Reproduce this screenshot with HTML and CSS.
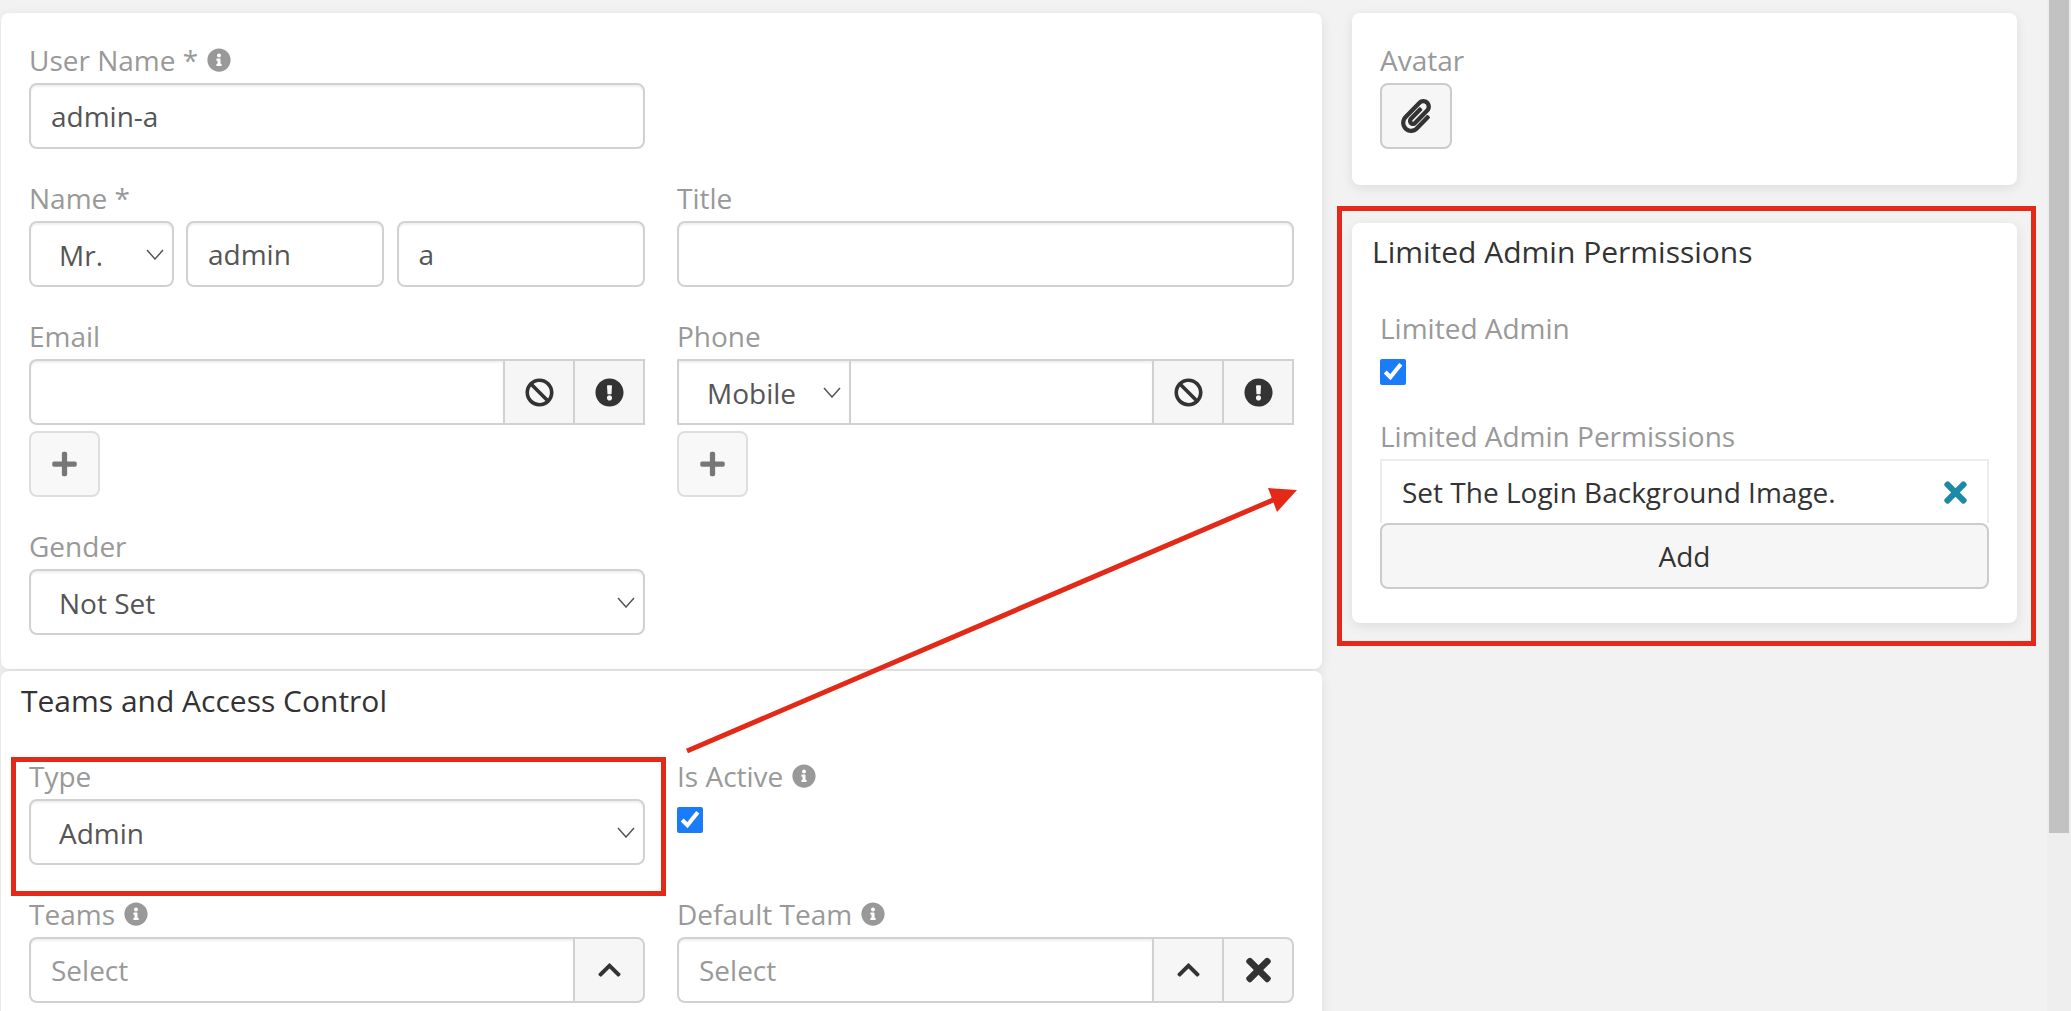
FILE: index.html
```html
<!DOCTYPE html>
<html lang="en">
<head>
  <meta charset="UTF-8">
  <meta name="viewport" content="width=device-width, initial-scale=1.0">
  <title>User - Edit</title>
  <link rel="stylesheet" href="styles.css">
</head>
<body>
  <!-- Icon sprite -->
  <svg class="sprite" aria-hidden="true">
    <symbol id="i-info" viewBox="0 0 512 512"><path d="M256 8C119.043 8 8 119.083 8 256c0 136.997 111.043 248 248 248s248-111.003 248-248C504 119.083 392.957 8 256 8zm0 110c23.196 0 42 18.804 42 42s-18.804 42-42 42-42-18.804-42-42 18.804-42 42-42zm56 254c0 6.627-5.373 12-12 12h-88c-6.627 0-12-5.373-12-12v-24c0-6.627 5.373-12 12-12h12v-64h-12c-6.627 0-12-5.373-12-12v-24c0-6.627 5.373-12 12-12h64c6.627 0 12 5.373 12 12v100h12c6.627 0 12 5.373 12 12v24z"/></symbol>
    <symbol id="i-ban" viewBox="0 0 512 512"><path d="M256 8C119.034 8 8 119.033 8 256s111.034 248 248 248 248-111.034 248-248S392.967 8 256 8zm130.108 117.892c65.448 65.448 70 165.481 20.677 235.637L150.47 105.216c70.204-49.356 170.226-44.735 235.638 20.676zM125.892 386.108c-65.448-65.448-70-165.481-20.677-235.637L361.53 406.784c-70.203 49.356-170.226 44.736-235.638-20.676z"/></symbol>
    <symbol id="i-alert" viewBox="0 0 512 512"><path d="M504 256c0 136.997-111.043 248-248 248S8 392.997 8 256C8 119.083 119.043 8 256 8s248 111.083 248 248zm-248 50c-25.405 0-46 20.595-46 46s20.595 46 46 46 46-20.595 46-46-20.595-46-46-46zm-43.673-165.346l7.418 136c.347 6.364 5.609 11.346 11.982 11.346h48.546c6.373 0 11.635-4.982 11.982-11.346l7.418-136c.375-6.874-5.098-12.654-11.982-12.654h-63.383c-6.884 0-12.356 5.78-11.981 12.654z"/></symbol>
    <symbol id="i-plus" viewBox="0 0 448 512"><path d="M416 208H272V64c0-17.67-14.33-32-32-32h-32c-17.67 0-32 14.33-32 32v144H32c-17.67 0-32 14.33-32 32v32c0 17.67 14.33 32 32 32h144v144c0 17.67 14.33 32 32 32h32c17.67 0 32-14.33 32-32V304h144c17.67 0 32-14.33 32-32v-32c0-17.67-14.33-32-32-32z"/></symbol>
    <symbol id="i-up" viewBox="0 0 448 512"><path d="M240.971 130.524l194.343 194.343c9.373 9.373 9.373 24.569 0 33.941l-22.667 22.667c-9.357 9.357-24.522 9.375-33.901.04L224 227.495 69.255 381.516c-9.379 9.335-24.544 9.317-33.901-.04l-22.667-22.667c-9.373-9.373-9.373-24.569 0-33.941L207.03 130.525c9.372-9.373 24.568-9.373 33.941-.001z"/></symbol>
    <symbol id="i-times" viewBox="0 0 352 512"><path d="M242.72 256l100.07-100.07c12.28-12.28 12.28-32.19 0-44.48l-22.24-22.24c-12.28-12.28-32.19-12.28-44.48 0L176 189.28 75.93 89.21c-12.28-12.28-32.19-12.28-44.48 0L9.21 111.45c-12.28 12.28-12.28 32.19 0 44.48L109.28 256 9.21 356.07c-12.28 12.28-12.28 32.19 0 44.48l22.24 22.24c12.28 12.28 32.2 12.28 44.48 0L176 322.72l100.07 100.07c12.28 12.28 32.2 12.28 44.48 0l22.24-22.24c12.28-12.28 12.28-32.19 0-44.48L242.72 256z"/></symbol>
    <symbol id="i-clip" viewBox="0 0 448 512"><path d="M43.246 466.142c-58.43-60.289-57.341-157.511 1.386-217.581L254.392 34c44.316-45.332 116.351-45.336 160.671 0 43.89 44.894 43.943 117.329 0 162.276L232.214 383.128c-29.855 30.537-78.633 30.111-107.982-.998-28.275-29.97-27.368-77.473 1.452-106.953l143.743-146.835c6.182-6.314 16.312-6.422 22.626-.241l22.861 22.379c6.315 6.182 6.422 16.312.241 22.626L171.427 319.927c-4.932 5.045-5.236 13.428-.648 18.292 4.372 4.634 11.245 4.711 15.688.165l182.849-186.851c19.613-20.062 19.613-52.725-.011-72.798-19.189-19.627-49.957-19.637-69.154 0L90.39 293.295c-34.763 35.56-35.299 93.12-1.191 128.313 34.01 35.093 88.985 35.137 123.058.286l172.06-175.999c6.177-6.319 16.307-6.433 22.626-.256l22.877 22.364c6.319 6.177 6.434 16.307.256 22.626l-172.06 175.998c-59.576 60.938-155.943 60.366-214.77-.485z"/></symbol>
  </svg>

  <div class="page">
    <main class="content">
      <div class="col-main">
        <section class="card card-user">
          <div class="row">
            <div class="field">
              <label class="label">User Name * <svg class="icon-info"><use href="#i-info"/></svg></label>
              <input class="control" type="text" value="admin-a">
            </div>
            <div class="field"></div>
          </div>

          <div class="row">
            <div class="field">
              <label class="label">Name *</label>
              <div class="name-group">
                <select class="control select salutation"><option>Mr.</option></select>
                <input class="control first-name" type="text" value="admin">
                <input class="control last-name" type="text" value="a">
              </div>
            </div>
            <div class="field">
              <label class="label">Title</label>
              <input class="control" type="text">
            </div>
          </div>

          <div class="row">
            <div class="field">
              <label class="label">Email</label>
              <div class="group">
                <input class="control group-input round-left" type="text">
                <button class="addon"><svg class="icon-ban"><use href="#i-ban"/></svg></button>
                <button class="addon"><svg class="icon-ban"><use href="#i-alert"/></svg></button>
              </div>
              <button class="btn-add"><svg class="icon-plus"><use href="#i-plus"/></svg></button>
            </div>
            <div class="field">
              <label class="label">Phone</label>
              <div class="group">
                <select class="control select phone-type"><option>Mobile</option></select>
                <input class="control group-input" type="text">
                <button class="addon"><svg class="icon-ban"><use href="#i-ban"/></svg></button>
                <button class="addon"><svg class="icon-ban"><use href="#i-alert"/></svg></button>
              </div>
              <button class="btn-add"><svg class="icon-plus"><use href="#i-plus"/></svg></button>
            </div>
          </div>

          <div class="row">
            <div class="field">
              <label class="label">Gender</label>
              <select class="control select"><option>Not Set</option></select>
            </div>
            <div class="field"></div>
          </div>
        </section>

        <section class="card card-teams">
          <h4 class="card-title">Teams and Access Control</h4>
          <div class="row">
            <div class="field">
              <label class="label">Type</label>
              <select class="control select"><option>Admin</option></select>
            </div>
            <div class="field">
              <label class="label">Is Active <svg class="icon-info"><use href="#i-info"/></svg></label>
              <input class="check" type="checkbox" checked>
            </div>
          </div>
          <div class="row">
            <div class="field">
              <label class="label">Teams <svg class="icon-info"><use href="#i-info"/></svg></label>
              <div class="group">
                <input class="control group-input round-left" type="text" placeholder="Select">
                <button class="addon round-right"><svg class="icon-up"><use href="#i-up"/></svg></button>
              </div>
            </div>
            <div class="field">
              <label class="label">Default Team <svg class="icon-info"><use href="#i-info"/></svg></label>
              <div class="group">
                <input class="control group-input round-left" type="text" placeholder="Select">
                <button class="addon"><svg class="icon-up"><use href="#i-up"/></svg></button>
                <button class="addon round-right"><svg class="icon-times"><use href="#i-times"/></svg></button>
              </div>
            </div>
          </div>
        </section>
      </div>

      <aside class="col-side">
        <section class="card card-avatar">
          <label class="label">Avatar</label>
          <button class="btn-attach"><svg class="icon-clip"><use href="#i-clip"/></svg></button>
        </section>

        <section class="card card-limited">
          <h4 class="card-title">Limited Admin Permissions</h4>
          <div class="side-field">
            <label class="label">Limited Admin</label>
            <input class="check" type="checkbox" checked>
          </div>
          <div class="side-field">
            <label class="label">Limited Admin Permissions</label>
            <div class="list-item">
              <span>Set The Login Background Image.</span>
              <svg class="icon-remove"><use href="#i-times"/></svg>
            </div>
            <button class="btn-block">Add</button>
          </div>
        </section>
      </aside>
    </main>

    <div class="scrollbar"><div class="scrollbar-thumb"></div></div>
  </div>

  <!-- Red annotations drawn on top of the screenshot -->
  <div class="mark mark-type"></div>
  <div class="mark mark-limited"></div>
  <svg class="arrow" viewBox="0 0 2071 1011">
    <line x1="687" y1="751" x2="1280" y2="497" stroke="#e32a19" stroke-width="5"/>
    <polygon points="1297,490 1268,488 1277,512" fill="#e32a19"/>
  </svg>
</body>
</html>
```

FILE: styles.css
```css
* {
  margin: 0;
  padding: 0;
  box-sizing: border-box;
  font-family: 'Open Sans', sans-serif;
}

body {
  background: #f2f2f2;
  color: #333;
  height: 1011px;
  overflow: hidden;
  position: relative;
}

.sprite {
  position: absolute;
  width: 0;
  height: 0;
}

/* Page columns */
.page {
  display: flex;
  height: 1011px;
}

.content {
  flex: 1;
  display: flex;
  align-items: flex-start;
  gap: 30px;
  padding: 13px 30px 0 1px;
}

.col-main {
  width: 1321px;
  display: flex;
  flex-direction: column;
  gap: 2px;
}

.col-side {
  width: 665px;
  display: flex;
  flex-direction: column;
  gap: 38px;
}

/* Scrollbar */
.scrollbar {
  width: 24px;
  padding-left: 2px;
  background: #eeeeee;
}

.scrollbar-thumb {
  width: 20px;
  height: 833px;
  background: #c2c2c2;
}

/* Cards */
.card {
  background: #fff;
  border-radius: 8px;
  box-shadow: 0 3px 12px rgba(0, 0, 0, 0.09);
}

.card-user {
  padding: 30px 28px 2px 28px;
}

.card-teams {
  padding: 10px 28px 40px 28px;
}

.card-teams .card-title {
  margin-left: -8px;
  margin-bottom: 38px;
}

.card-avatar {
  padding: 30px 28px 36px;
}

.card-limited {
  padding: 9px 28px 34px;
}

.card-limited .card-title {
  margin-left: -8px;
  margin-bottom: 39px;
}

.card-title {
  font-size: 30px;
  font-weight: 400;
  line-height: 40px;
  color: #333;
}

/* Fields */
.row {
  display: grid;
  grid-template-columns: 616px 617px;
  gap: 32px;
}

.field {
  margin-bottom: 32px;
}

.side-field {
  margin-bottom: 34px;
}

.side-field:last-child {
  margin-bottom: 0;
}

.label {
  display: flex;
  align-items: center;
  gap: 9px;
  height: 34px;
  margin-bottom: 6px;
  font-size: 28px;
  line-height: 34px;
  color: #999;
}

.icon-info {
  width: 24px;
  height: 24px;
  fill: #999;
}

.control {
  display: block;
  width: 100%;
  height: 66px;
  padding: 0 20px;
  background: #fff;
  border: 2px solid #ced2d2;
  border-radius: 8px;
  box-shadow: inset 0 2px 2px rgba(0, 0, 0, 0.06);
  font-size: 28px;
  color: #555;
  outline: none;
}

.control::placeholder {
  color: #999;
  opacity: 1;
}

.select {
  appearance: none;
  padding-left: 28px;
  padding-top: 2px;
  background-image: url("data:image/svg+xml,%3Csvg xmlns='http://www.w3.org/2000/svg' width='18' height='11' viewBox='0 0 18 11'%3E%3Cpath d='M1 1l8 9 8-9' fill='none' stroke='%23555' stroke-width='1.5'/%3E%3C/svg%3E");
  background-repeat: no-repeat;
  background-position: right 8px center;
}

/* Name row */
.name-group {
  display: flex;
  gap: 12.5px;
}

.salutation {
  width: 144.5px;
  flex: none;
}

.first-name {
  width: 198px;
  flex: none;
}

.last-name {
  flex: 1;
  min-width: 0;
}

/* Input groups */
.group {
  display: flex;
  height: 66px;
}

.group .control {
  border-radius: 0;
}

.group-input {
  flex: 1;
  min-width: 0;
  border-right: 0;
}

.group .round-left {
  border-radius: 8px 0 0 8px;
}

.phone-type {
  width: 172px;
  flex: none;
  border-right: 0;
}

.addon {
  width: 72px;
  flex: none;
  display: flex;
  align-items: center;
  justify-content: center;
  background: #f6f6f6;
  border: 2px solid #ced2d2;
  margin-left: -2px;
  color: #333;
}

.group-input + .addon {
  margin-left: 0;
}

.round-right {
  border-radius: 0 8px 8px 0;
}

.icon-ban {
  width: 29px;
  height: 29px;
  fill: #333;
}

.icon-up {
  width: 23px;
  height: 26px;
  fill: #333;
}

.icon-times {
  width: 25px;
  height: 36px;
  fill: #333;
}

.btn-add {
  display: flex;
  align-items: center;
  justify-content: center;
  width: 71px;
  height: 66px;
  margin-top: 6px;
  background: #f8f8f8;
  border: 2px solid #dedede;
  border-radius: 8px;
}

.icon-plus {
  width: 25px;
  height: 28px;
  fill: #777;
}

.check {
  display: block;
  width: 26px;
  height: 26px;
  margin-top: 14px;
  accent-color: #1a7cf9;
}

.btn-attach {
  display: flex;
  align-items: center;
  justify-content: center;
  width: 72px;
  height: 66px;
  background: #f6f6f6;
  border: 2px solid #cccccc;
  border-radius: 8px;
}

.icon-clip {
  width: 30px;
  height: 34px;
  fill: #333;
}

/* Permission list */
.list-item {
  display: flex;
  align-items: center;
  justify-content: space-between;
  height: 64px;
  padding: 0 20px 0 20px;
  border: 2px solid #e9eded;
  border-bottom: 0;
  font-size: 28px;
  color: #333;
}

.icon-remove {
  width: 23px;
  height: 33px;
  fill: #1b8aa8;
}

.btn-block {
  display: block;
  width: 100%;
  height: 66px;
  background: #f6f6f6;
  border: 2px solid #cccccc;
  border-radius: 8px;
  font-size: 28px;
  color: #333;
}

/* Annotations */
.mark {
  position: absolute;
  border: 5px solid #e32a19;
}

.mark-type {
  left: 11px;
  top: 757px;
  width: 655px;
  height: 139px;
}

.mark-limited {
  left: 1337px;
  top: 206px;
  width: 699px;
  height: 440px;
}

.arrow {
  position: absolute;
  left: 0;
  top: 0;
  width: 2071px;
  height: 1011px;
  pointer-events: none;
}
```
